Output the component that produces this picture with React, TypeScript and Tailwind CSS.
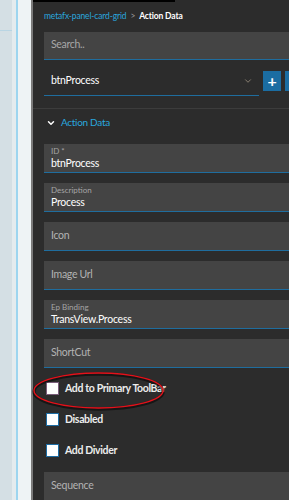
import { ChevronDown } from "lucide-react";

const FONT = { fontFamily: "Lato, 'Noto Sans', sans-serif" };

type Field = { label: string; value?: string };

const FIELDS: Field[] = [
  { label: "ID *", value: "btnProcess" },
  { label: "Description", value: "Process" },
  { label: "Icon" },
  { label: "Image Url" },
  { label: "Ep Binding", value: "TransView.Process" },
  { label: "ShortCut" },
];

const CHECKS = ["Add to Primary ToolBar", "Disabled", "Add Divider"];

function FormField({ field }: { field: Field }) {
  return (
    <div className="flex h-[29px] w-[260px] shrink-0 flex-col justify-center border-b border-[#1f6d9e] bg-[#444444] px-[7px]">
      {field.value ? (
        <>
          <span className="text-[8px] leading-[10px] text-[#a5a5a5]">{field.label}</span>
          <span className="text-[10.5px] leading-[14px] tracking-[-0.25px] text-white">{field.value}</span>
        </>
      ) : (
        <span className="text-[10.5px] tracking-[-0.3px] text-[#b3b3b3]">{field.label}</span>
      )}
    </div>
  );
}

export default function App() {
  return (
    <div className="flex h-[500px] w-[289px] overflow-hidden" style={FONT}>
      {/* left page strip */}
      <div className="relative flex h-full w-[31px] shrink-0">
        <div className="flex w-[12px] flex-col bg-[#d4dfe4]">
          <div className="h-[30px]" />
          <div className="h-px bg-[#b9d5e3]" />
        </div>
        <div className="w-[4px] bg-[#e4ebee]" />
        <div className="w-[2px] bg-[#9dd5ef]" />
        <div className="flex-1 bg-[#eef3f5]" />
      </div>
      <div className="w-[2px] shrink-0 bg-[#7b7b7b]" />

      {/* dark panel */}
      <div className="relative flex min-w-0 flex-1 flex-col bg-[#2c2c2c]">
        <div className="h-[2px] w-[142px] bg-black" />
        <div className="flex h-[31px] items-center pl-[11px] text-[8.5px] tracking-[-0.15px]">
          <span className="text-[#2aa7df]">metafx-panel-card-grid</span>
          <span className="mx-[4px] text-[#9a9a9a]">&gt;</span>
          <span className="font-bold text-white">Action Data</span>
        </div>

        <div className="flex flex-col pl-[11px]">
          <div className="flex h-[28px] w-[260px] items-center border-b border-[#1f6d9e] bg-[#444444] px-[7px] text-[10.5px] tracking-[-0.3px] text-[#a8a8a8]">
            Search..
          </div>

          <div className="mt-[4px] flex h-[32px] items-start">
            <div className="flex h-[32px] w-[218px] items-center justify-between border-b border-[#1f6d9e] pl-[7px] pr-[6px] pt-[4px]">
              <span className="text-[10.5px] tracking-[-0.25px] text-white">btnProcess</span>
              <ChevronDown size={10} strokeWidth={2} className="text-[#978d7c]" />
            </div>
            <div className="ml-[4px] mt-[7px] flex h-[20px] w-[18px] items-center justify-center bg-[#1b6da2] text-[16px] font-bold leading-none text-white">
              +
            </div>
            <div className="ml-[4px] mt-[7px] h-[20px] w-[4px] bg-[#1b6da2]" />
          </div>
        </div>

        <div className="mt-[12px] h-[2px] w-full bg-[#3c3c3c]" />

        <div className="flex h-[27px] items-center gap-[5px] pl-[13px] pt-[1px]">
          <ChevronDown size={10} strokeWidth={3.5} className="text-white" />
          <span className="text-[10px] tracking-[-0.3px] text-[#2aa7df]">Action Data</span>
        </div>

        <div className="mt-[9px] flex flex-col gap-[10px] pl-[11px]">
          {FIELDS.map((f) => (
            <FormField key={f.label} field={f} />
          ))}
        </div>

        <div className="mt-[5px] flex flex-col pl-[13px]">
          {CHECKS.map((c, i) => (
            <div key={c} className="flex h-[31px] items-center gap-[6px]">
              <div
                className={`h-[13px] w-[13px] border-[1.5px] bg-white ${i === 0 ? "border-[#7a5d7a]" : "border-[#1d6ca3]"}`}
              />
              <span className="text-[10.5px] font-bold tracking-[-0.35px] text-[#ececec]">{c}</span>
            </div>
          ))}
        </div>

        <div className="ml-[11px] mt-[6px] flex h-[29px] w-[260px] items-center bg-[#444444] px-[7px] text-[10.5px] tracking-[-0.3px] text-[#b3b3b3]">
          Sequence
        </div>

        {/* red annotation ellipse */}
        <svg
          className="pointer-events-none absolute left-[-1px] top-[371px]"
          width="134"
          height="40"
          viewBox="0 0 134 40"
        >
          <ellipse cx="66.5" cy="20.5" rx="64.5" ry="17.5" fill="none" stroke="rgba(0,0,0,0.5)" strokeWidth="3.5" />
          <ellipse cx="66.5" cy="19.5" rx="64.5" ry="17.5" fill="none" stroke="#e3121b" strokeWidth="1.4" />
        </svg>
      </div>
    </div>
  );
}
